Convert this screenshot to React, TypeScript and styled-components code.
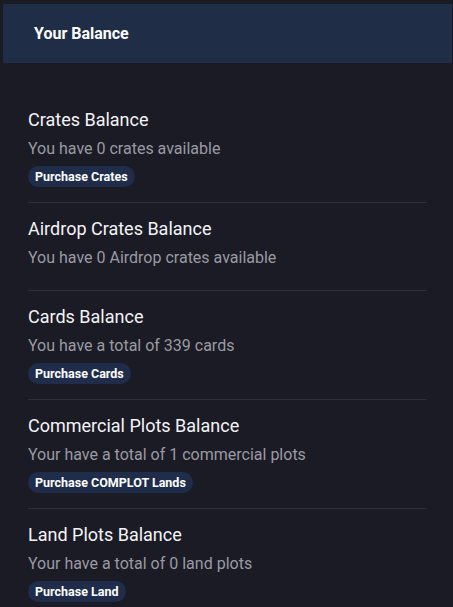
import React from "react";
import styled, { createGlobalStyle } from "styled-components";

const GlobalStyle = createGlobalStyle`
    html, body {
        margin: 0;
        padding: 0;
        background: #1b1b26;
        font-family: Roboto, "Liberation Sans", sans-serif;
    }
`

const Page = styled.div`
    padding: 4px 1px 0 3px;
    min-height: 607px;
    box-sizing: border-box;
`

const Card = styled.section`
    display: flex;
    flex-direction: column;
`

const Header = styled.header`
    height: 59px;
    display: flex;
    align-items: center;
    padding-left: 31px;
    background: #202d47;
    color: #ffffff;
    font-size: 16px;
    font-weight: 700;
`

const Body = styled.div`
    padding: 47px 25px 0 25px;
`

const Section = styled.div`
    display: flex;
    flex-direction: column;
    align-items: flex-start;
    padding: 16px 0 15px 0;
    border-bottom: 1px solid #2e2e3b;

    &:first-child {
        padding-top: 0;
    }

    &:last-child {
        border-bottom: none;
    }
`

const Title = styled.h3`
    margin: 0;
    font-size: 18px;
    line-height: 20px;
    font-weight: 400;
    color: #f4f4f6;
`

const Text = styled.p`
    margin: 8px 0 6px 0;
    font-size: 16px;
    line-height: 22px;
    color: #9a9aa2;
`

const Badge = styled.button`
    border: none;
    background: #1f2d4a;
    color: #ffffff;
    font-family: Roboto, "Liberation Sans", sans-serif;
    font-size: 12.5px;
    font-weight: 700;
    line-height: 21px;
    padding: 0 7px;
    border-radius: 11px;
    cursor: pointer;
`

const balances = [
    { title: "Crates Balance", text: "You have 0 crates available", action: "Purchase Crates" },
    { title: "Airdrop Crates Balance", text: "You have 0 Airdrop crates available" },
    { title: "Cards Balance", text: "You have a total of 339 cards", action: "Purchase Cards" },
    { title: "Commercial Plots Balance", text: "Your have a total of 1 commercial plots", action: "Purchase COMPLOT Lands" },
    { title: "Land Plots Balance", text: "Your have a total of 0 land plots", action: "Purchase Land" },
]

const App = (): JSX.Element => {
    return (
        <Page>
            <GlobalStyle />
            <Card>
                <Header>Your Balance</Header>
                <Body>
                    {balances.map((b) => (
                        <Section key={b.title}>
                            <Title>{b.title}</Title>
                            <Text>{b.text}</Text>
                            {b.action && <Badge>{b.action}</Badge>}
                        </Section>
                    ))}
                </Body>
            </Card>
        </Page>
    )
};

export default App;
